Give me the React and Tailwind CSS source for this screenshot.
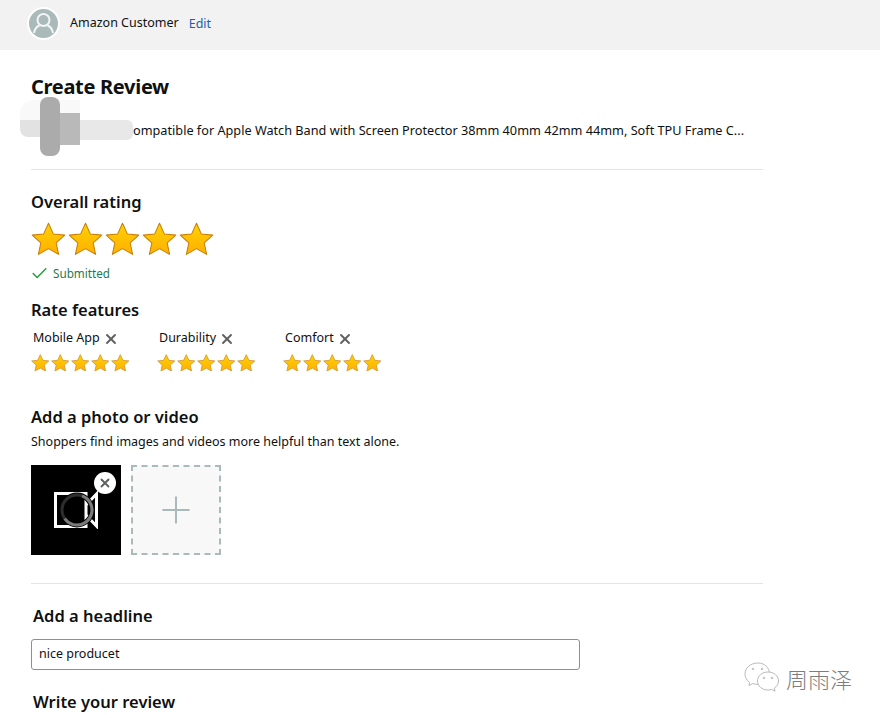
import { X, Check, Plus } from 'lucide-react'

const STAR = 'M12 1.2l3.2 7.1 7.6.8-5.7 5.2 1.6 7.6L12 18.1 5.3 21.9l1.6-7.6L1.2 9.1l7.6-.8z'

function Star({ size, id, stroke = '#c77f0a', strokeWidth = 0.7 }) {
  return (
    <svg width={size} height={size * 0.96} viewBox="0.4 0.4 23.2 22.300" className="shrink-0">
      <defs>
        <linearGradient id={id} x1="0" y1="0" x2="0" y2="1">
          <stop offset="0" stopColor="#ffd200" />
          <stop offset="1" stopColor="#ffb000" />
        </linearGradient>
      </defs>
      <path d={STAR} fill={`url(#${id})`} stroke={stroke} strokeWidth={strokeWidth} strokeLinejoin="round" />
    </svg>
  )
}

function Feature({ name, idx, width }) {
  return (
    <div className={width}>
      <div className="flex items-center h-[20px] pl-[2px] text-[12.500px] text-[#0f1111]">
        <span>{name}</span>
        <X size={16} strokeWidth={2.800} className="ml-[3px] text-[#5f6161]" />
      </div>
      <div className="flex gap-[1.500px] mt-[5px]">
        {[0, 1, 2, 3, 4].map((i) => (
          <Star key={i} size={18.500} id={`f${idx}${i}`} stroke="#d49a3a" strokeWidth={1.100} />
        ))}
      </div>
    </div>
  )
}

export default function App() {
  return (
    <div className="relative w-[880px] h-[718px] overflow-hidden bg-white text-[#0f1111] font-['Noto_Sans','Open_Sans',sans-serif]">
      <div className="flex items-center h-[50px] pl-[27px] pb-[4px] bg-[#f2f2f2]">
        <div className="flex items-center justify-center w-[33px] h-[33px] rounded-full bg-[#aab9b9] border-[2px] border-white overflow-hidden">
          <svg width="29" height="29" viewBox="0 0 29 29" fill="none" stroke="#f2f5f5" strokeWidth="2">
            <circle cx="14.500" cy="11" r="6" />
            <path d="M5 24c1-5 4-7 5.500-7.500M24 24c-1-5-4-7-5.500-7.500" />
          </svg>
        </div>
        <span className="ml-[10px] text-[12.500px] leading-none">Amazon Customer</span>
        <span className="ml-[10px] text-[12.500px] leading-none mt-[2px] text-[#1c5fb0]">Edit</span>
      </div>

      <div className="w-[732px] ml-[31px]">
        <h1 className="mt-[24px] text-[20px] leading-[26px] font-bold tracking-[-0.3px]">Create Review</h1>
        <p className="mt-[20px] pl-[94px] text-[12.700px] leading-[20px] whitespace-nowrap overflow-hidden">
          Compatible for Apple Watch Band with Screen Protector 38mm 40mm 42mm 44mm, Soft TPU Frame C...
        </p>
        <div className="mt-[29px] h-px bg-[#e3e6e6]" />

        <h2 className="mt-[21px] text-[16.500px] leading-[22px] font-semibold">Overall rating</h2>
        <div className="flex gap-[2px] mt-[9px]">
          {[0, 1, 2, 3, 4].map((i) => (
            <Star key={i} size={35} id={`o${i}`} />
          ))}
        </div>
        <div className="flex items-center mt-[9px] h-[18px] text-[11.700px] text-[#1f7a4d]">
          <Check size={19} strokeWidth={1.800} className="text-[#1f9d3a] -ml-[1px]" />
          <span className="ml-[4px]">Submitted</span>
        </div>

        <h2 className="mt-[16px] text-[16.500px] leading-[22px] font-semibold">Rate features</h2>
        <div className="flex mt-[8px]">
          <Feature name="Mobile App" idx={0} width="w-[126px]" />
          <Feature name="Durability" idx={1} width="w-[126px]" />
          <Feature name="Comfort" idx={2} width="w-[126px]" />
        </div>

        <h2 className="mt-[35px] text-[16.500px] leading-[22px] font-semibold">Add a photo or video</h2>
        <p className="mt-[5px] text-[12.500px] leading-[18px]">Shoppers find images and videos more helpful than text alone.</p>
        <div className="flex gap-[10px] mt-[14px]">
          <div className="relative flex items-center justify-center w-[90px] h-[90px] bg-black">
            <svg width="46" height="38" viewBox="0 0 46 38" fill="none">
              <path d="M2.500 2.500H33V35.500H2.500ZM33 14L43.500 3V35L33 24" stroke="#fff" strokeWidth="3" />
              <circle cx="24" cy="19" r="15" stroke="#000" strokeWidth="5" />
              <circle cx="24" cy="19" r="15" stroke="#2e2e2e" strokeWidth="3" />
              <circle cx="24" cy="19" r="15" stroke="#7a7a7a" strokeWidth="3" strokeDasharray="56 39" transform="rotate(-70 24 19)" />
            </svg>
            <div className="absolute top-[7px] right-[5px] flex items-center justify-center w-[22px] h-[22px] rounded-full bg-white">
              <X size={14} strokeWidth={3.200} className="text-[#5f6161]" />
            </div>
          </div>
          <div className="flex items-center justify-center w-[90px] h-[90px] bg-[#f8f8f8] border-[2px] border-dashed border-[#aab9b9]">
            <Plus size={44} strokeWidth={1.100} className="text-[#aab9b9]" />
          </div>
        </div>
        <div className="mt-[28px] h-px bg-[#e3e6e6]" />

        <h2 className="mt-[21px] pl-[2px] text-[16.500px] leading-[22px] font-semibold">Add a headline</h2>
        <div className="flex items-center w-[549px] h-[31px] mt-[12px] px-[7px] bg-white border border-[#8d9090] rounded-[3px] text-[12.500px]">
          nice producet
        </div>
        <h2 className="mt-[21px] pl-[2px] text-[16.500px] leading-[22px] font-semibold">Write your review</h2>
      </div>

      {/* blurred-out product image */}
      <div className="absolute left-[20px] top-[100px] w-[60px] h-[20px] rounded-tl-[14px] bg-[#f9f9f9]" />
      <div className="absolute left-[20px] top-[120px] w-[20px] h-[17px] rounded-bl-[8px] bg-[#e2e2e2]" />
      <div className="absolute left-[80px] top-[120px] w-[53px] h-[20px] rounded-r-[6px] bg-[#e8e8e9]" />
      <div className="absolute left-[60px] top-[113px] w-[20px] h-[32px] bg-[#b9b9b9]" />
      <div className="absolute left-[40px] top-[97px] w-[20px] h-[59px] rounded-[8px] bg-[#ababab]" />

      {/* watermark */}
      <div className="absolute left-[743px] top-[661px] flex items-center">
        <svg width="38" height="34" viewBox="0 0 38 34" fill="white" stroke="#a8a8a8" strokeWidth="0.800">
          <path d="M15 2C7.500 2 2 7 2 13c0 3.500 1.800 6.400 4.600 8.400L6 24.500l3.800-1.900c1.600.5 3.300.8 5.200.8 7 0 11.500-5 11.500-10.400C26.500 7 22 2 15 2z" />
          <path d="M25 11c-6 0-10.500 4-10.500 9s4.500 9 10.500 9c1.300 0 2.600-.2 3.700-.6l3.300 1.800-.7-3C34 25.500 35.500 23 35.500 20c0-5-4.500-9-10.500-9z" />
          <circle cx="10" cy="8" r="0.800" /><circle cx="19" cy="8" r="0.800" />
          <circle cx="21" cy="17" r="0.800" /><circle cx="29" cy="17" r="0.800" />
        </svg>
        <span className="ml-[5px] text-[22px] leading-none text-[#7c7c7c] font-['Noto_Sans_CJK_SC',sans-serif] font-light">周雨泽</span>
      </div>
    </div>
  )
}
